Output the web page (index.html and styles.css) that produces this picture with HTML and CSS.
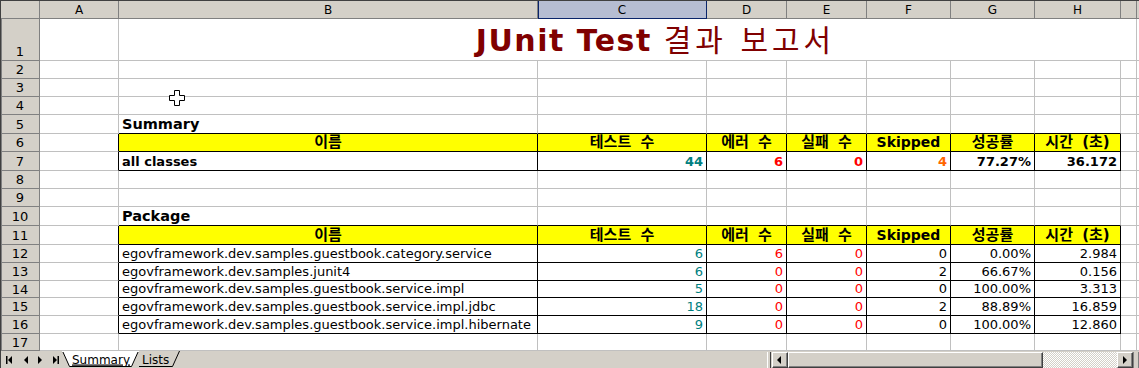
FILE: index.html
```html
<!DOCTYPE html>
<html lang="ko">
<head>
    <meta charset="UTF-8">
    <title>JUnit Test 결과 보고서</title>
    <link rel="stylesheet" href="styles.css">
</head>
<body>
<div class="window">
    <div class="sheet">
        <!-- column headers -->
        <div class="ch corner"></div>
        <div class="ch">A</div>
        <div class="ch">B</div>
        <div class="ch sel">C</div>
        <div class="ch">D</div>
        <div class="ch">E</div>
        <div class="ch">F</div>
        <div class="ch">G</div>
        <div class="ch">H</div>
        <div class="ch"></div>
        <div class="ch"></div>

        <!-- 1 -->
        <div class="rh tall">1</div>
        <div class="cell"></div>
        <div class="cell title"><span>JUnit Test <span class="ko">결과 보고서</span></span></div>
        <div class="cell"></div>

        <!-- 2 -->
        <div class="rh">2</div>
        <div class="cell"></div><div class="cell"></div><div class="cell"></div><div class="cell"></div><div class="cell"></div>
        <div class="cell"></div><div class="cell"></div><div class="cell"></div><div class="cell"></div><div class="cell"></div>
        <!-- 3 -->
        <div class="rh">3</div>
        <div class="cell"></div><div class="cell"></div><div class="cell"></div><div class="cell"></div><div class="cell"></div>
        <div class="cell"></div><div class="cell"></div><div class="cell"></div><div class="cell"></div><div class="cell"></div>
        <!-- 4 -->
        <div class="rh">4</div>
        <div class="cell"></div><div class="cell"></div><div class="cell"></div><div class="cell"></div><div class="cell"></div>
        <div class="cell"></div><div class="cell"></div><div class="cell"></div><div class="cell"></div><div class="cell"></div>

        <!-- 5 -->
        <div class="rh">5</div>
        <div class="cell"></div>
        <div class="cell tb lbl">Summary</div>
        <div class="cell tb"></div><div class="cell tb"></div><div class="cell tb"></div>
        <div class="cell tb"></div><div class="cell tb"></div><div class="cell tb"></div>
        <div class="cell"></div><div class="cell"></div>

        <!-- 6 -->
        <div class="rh">6</div>
        <div class="cell lb"></div>
        <div class="cell hd">이름</div>
        <div class="cell hd">테스트 수</div>
        <div class="cell hd">에러 수</div>
        <div class="cell hd">실패 수</div>
        <div class="cell hd en">Skipped</div>
        <div class="cell hd">성공률</div>
        <div class="cell hd">시간 (초)</div>
        <div class="cell"></div><div class="cell"></div>

        <!-- 7 -->
        <div class="rh">7</div>
        <div class="cell lb"></div>
        <div class="cell td name bold">all classes</div>
        <div class="cell td bold teal">44</div>
        <div class="cell td bold red">6</div>
        <div class="cell td bold red">0</div>
        <div class="cell td bold orange">4</div>
        <div class="cell td bold">77.27%</div>
        <div class="cell td bold">36.172</div>
        <div class="cell"></div><div class="cell"></div>

        <!-- 8 -->
        <div class="rh">8</div>
        <div class="cell"></div><div class="cell"></div><div class="cell"></div><div class="cell"></div><div class="cell"></div>
        <div class="cell"></div><div class="cell"></div><div class="cell"></div><div class="cell"></div><div class="cell"></div>
        <!-- 9 -->
        <div class="rh">9</div>
        <div class="cell"></div><div class="cell"></div><div class="cell"></div><div class="cell"></div><div class="cell"></div>
        <div class="cell"></div><div class="cell"></div><div class="cell"></div><div class="cell"></div><div class="cell"></div>

        <!-- 10 -->
        <div class="rh">10</div>
        <div class="cell"></div>
        <div class="cell tb lbl">Package</div>
        <div class="cell tb"></div><div class="cell tb"></div><div class="cell tb"></div>
        <div class="cell tb"></div><div class="cell tb"></div><div class="cell tb"></div>
        <div class="cell"></div><div class="cell"></div>

        <!-- 11 -->
        <div class="rh">11</div>
        <div class="cell lb"></div>
        <div class="cell hd">이름</div>
        <div class="cell hd">테스트 수</div>
        <div class="cell hd">에러 수</div>
        <div class="cell hd">실패 수</div>
        <div class="cell hd en">Skipped</div>
        <div class="cell hd">성공률</div>
        <div class="cell hd">시간 (초)</div>
        <div class="cell"></div><div class="cell"></div>

        <!-- 12 -->
        <div class="rh">12</div>
        <div class="cell lb"></div>
        <div class="cell td name">egovframework.dev.samples.guestbook.category.service</div>
        <div class="cell td teal">6</div>
        <div class="cell td red">6</div>
        <div class="cell td red">0</div>
        <div class="cell td">0</div>
        <div class="cell td">0.00%</div>
        <div class="cell td">2.984</div>
        <div class="cell"></div><div class="cell"></div>

        <!-- 13 -->
        <div class="rh">13</div>
        <div class="cell lb"></div>
        <div class="cell td name">egovframework.dev.samples.junit4</div>
        <div class="cell td teal">6</div>
        <div class="cell td red">0</div>
        <div class="cell td red">0</div>
        <div class="cell td">2</div>
        <div class="cell td">66.67%</div>
        <div class="cell td">0.156</div>
        <div class="cell"></div><div class="cell"></div>

        <!-- 14 -->
        <div class="rh">14</div>
        <div class="cell lb"></div>
        <div class="cell td name">egovframework.dev.samples.guestbook.service.impl</div>
        <div class="cell td teal">5</div>
        <div class="cell td red">0</div>
        <div class="cell td red">0</div>
        <div class="cell td">0</div>
        <div class="cell td">100.00%</div>
        <div class="cell td">3.313</div>
        <div class="cell"></div><div class="cell"></div>

        <!-- 15 -->
        <div class="rh">15</div>
        <div class="cell lb"></div>
        <div class="cell td name">egovframework.dev.samples.guestbook.service.impl.jdbc</div>
        <div class="cell td teal">18</div>
        <div class="cell td red">0</div>
        <div class="cell td red">0</div>
        <div class="cell td">2</div>
        <div class="cell td">88.89%</div>
        <div class="cell td">16.859</div>
        <div class="cell"></div><div class="cell"></div>

        <!-- 16 -->
        <div class="rh">16</div>
        <div class="cell lb"></div>
        <div class="cell td name">egovframework.dev.samples.guestbook.service.impl.hibernate</div>
        <div class="cell td teal">9</div>
        <div class="cell td red">0</div>
        <div class="cell td red">0</div>
        <div class="cell td">0</div>
        <div class="cell td">100.00%</div>
        <div class="cell td">12.860</div>
        <div class="cell"></div><div class="cell"></div>

        <!-- 17 -->
        <div class="rh">17</div>
        <div class="cell"></div><div class="cell"></div><div class="cell"></div><div class="cell"></div><div class="cell"></div>
        <div class="cell"></div><div class="cell"></div><div class="cell"></div><div class="cell"></div><div class="cell"></div>

        <!-- mouse cursor -->
        <svg class="cursor" width="16" height="16" viewBox="0 0 16 16">
            <path d="M5.5 0.5 H10.5 V5.5 H15.5 V10.5 H10.5 V15.5 H5.5 V10.5 H0.5 V5.5 H5.5 Z" fill="#fff" stroke="#000"/>
        </svg>
    </div>

    <div class="tabbar">
        <svg class="tabnav" width="61" height="17" viewBox="0 0 61 17">
            <rect x="5" y="5" width="1.5" height="8" fill="#000"/>
            <polygon points="11,5 11,13 7,9" fill="#000"/>
            <polygon points="27,5 27,13 23,9" fill="#000"/>
            <polygon points="37,5 37,13 41,9" fill="#000"/>
            <polygon points="52,5 52,13 56,9" fill="#000"/>
            <rect x="56.5" y="5" width="1.5" height="8" fill="#000"/>
        </svg>
        <svg class="tabs" width="120" height="17" viewBox="0 0 120 17">
            <polygon points="70,0 77,15.5 110.5,15.5 117.5,0" fill="#d4d0c8"/>
            <polyline points="77,15.5 110.5,15.5 117.5,0" fill="none" stroke="#000"/>
            <text x="80" y="12.5" class="tabtext">Lists</text>
            <polygon points="0.5,0 7.5,15.5 69.5,15.5 76.5,0" fill="#fff" stroke="#000"/>
            <line x1="0" y1="0.5" x2="77" y2="0.5" stroke="#fff"/>
            <text x="10" y="12.5" class="tabtext" text-decoration="underline">Summary</text>
        </svg>
        <div class="spacer"></div>
        <div class="hscroll">
            <div class="split"></div>
            <div class="sbtn">
                <svg width="14" height="14" viewBox="0 0 14 14"><polygon points="8,3 8,11 4,7" fill="#000"/></svg>
            </div>
            <div class="thumb"></div>
            <div class="track"></div>
            <div class="sbtn">
                <svg width="14" height="14" viewBox="0 0 14 14"><polygon points="5,3 5,11 9,7" fill="#000"/></svg>
            </div>
            <div class="tail"></div>
        </div>
    </div>
</div>
</body>
</html>
```

FILE: styles.css
```css
* {
    box-sizing: border-box;
}
body {
    margin: 0;
    background: #fff;
    font-family: "DejaVu Sans", "Noto Sans CJK KR", sans-serif;
    color: #000;
    overflow: hidden;
}
.window {
    width: 1139px;
    height: 368px;
    border-left: 1px solid #404040;
    border-top: 1px solid #404040;
}
.sheet {
    position: relative;
    display: grid;
    grid-template-columns: 39px 79px 419px 169px 80px 80px 84px 84px 86px 16px 1fr;
    grid-template-rows: 18px 42px 18px 18px 18px 19px 18px 19px 18px 18px 19px 19px 18px 18px 17px 18px 18px 17px;
}
.cell {
    display: flex;
    align-items: flex-end;
    padding: 0 3px 1px;
    border-right: 1px solid #c0c0c0;
    border-bottom: 1px solid #c0c0c0;
    font-size: 13px;
    line-height: 15px;
    white-space: nowrap;
    overflow: hidden;
}
.ch {
    display: flex;
    align-items: center;
    justify-content: center;
    background: #d4d0c8;
    border-right: 1px solid #808080;
    border-bottom: 1px solid #808080;
    font-size: 12px;
    line-height: 14px;
}
.ch.sel {
    background: #b6bdd2;
    border-right-color: #0a246a;
    border-bottom-color: #0a246a;
    box-shadow: inset 1px 0 #0a246a;
}
.rh {
    display: flex;
    align-items: center;
    justify-content: center;
    background: #d4d0c8;
    border-right: 1px solid #808080;
    border-bottom: 1px solid #808080;
    box-shadow: inset 1px 0 #808080;
    font-size: 13px;
    line-height: 15px;
}
.rh.tall {
    align-items: flex-end;
    padding-bottom: 1px;
}
.title {
    grid-column: span 8;
    justify-content: center;
    padding: 0 0 2px 56px;
    color: #800000;
    font-size: 30px;
    line-height: 34px;
    font-weight: bold;
    letter-spacing: 1.5px;
}
.title .ko {
    font-weight: normal;
    letter-spacing: 4px;
}
.lbl {
    font-weight: bold;
    font-size: 14.5px;
    line-height: 16px;
}
.tb {
    border-bottom-color: #000;
}
.lb {
    border-right-color: #000;
}
.hd {
    justify-content: center;
    background: #ffff00;
    border-right-color: #000;
    border-bottom-color: #000;
    font-weight: bold;
    font-size: 15px;
    word-spacing: 4px;
}
.hd.en {
    font-size: 14px;
    word-spacing: 0;
}
.td {
    justify-content: flex-end;
    border-right-color: #000;
    border-bottom-color: #000;
}
.td.name {
    justify-content: flex-start;
}
.bold {
    font-weight: bold;
}
.teal {
    color: #008080;
}
.red {
    color: #ff0000;
}
.orange {
    color: #ff6600;
}
.cursor {
    position: absolute;
    left: 168px;
    top: 89px;
}

/* sheet tabs + scroll bar */
.tabbar {
    display: flex;
    height: 17px;
    background: #d4d0c8;
}
.tabnav, .tabs {
    display: block;
    flex: none;
}
.tabtext {
    font-family: "DejaVu Sans", sans-serif;
    font-size: 12px;
    fill: #000;
}
.spacer {
    flex: 1;
}
.hscroll {
    display: flex;
    width: 372px;
    height: 16px;
    margin-top: 1px;
}
.split {
    width: 4px;
    margin-right: 1px;
    border-left: 1px solid #fff;
    border-right: 1px solid #404040;
    background: #d4d0c8;
}
.sbtn, .thumb {
    background: #d4d0c8;
    border: 1px solid;
    border-color: #fff #404040 #404040 #fff;
    box-shadow: inset -1px -1px #808080;
}
.sbtn {
    width: 16px;
}
.sbtn svg {
    display: block;
}
.thumb {
    width: 255px;
}
.track {
    width: 74px;
    background: repeating-conic-gradient(#fff 0 25%, #d4d0c8 0 50%) 0 0 / 2px 2px;
}
.tail {
    width: 6px;
    border-left: 1px solid #808080;
    border-right: 1px solid #808080;
    background: #d4d0c8;
}
```
